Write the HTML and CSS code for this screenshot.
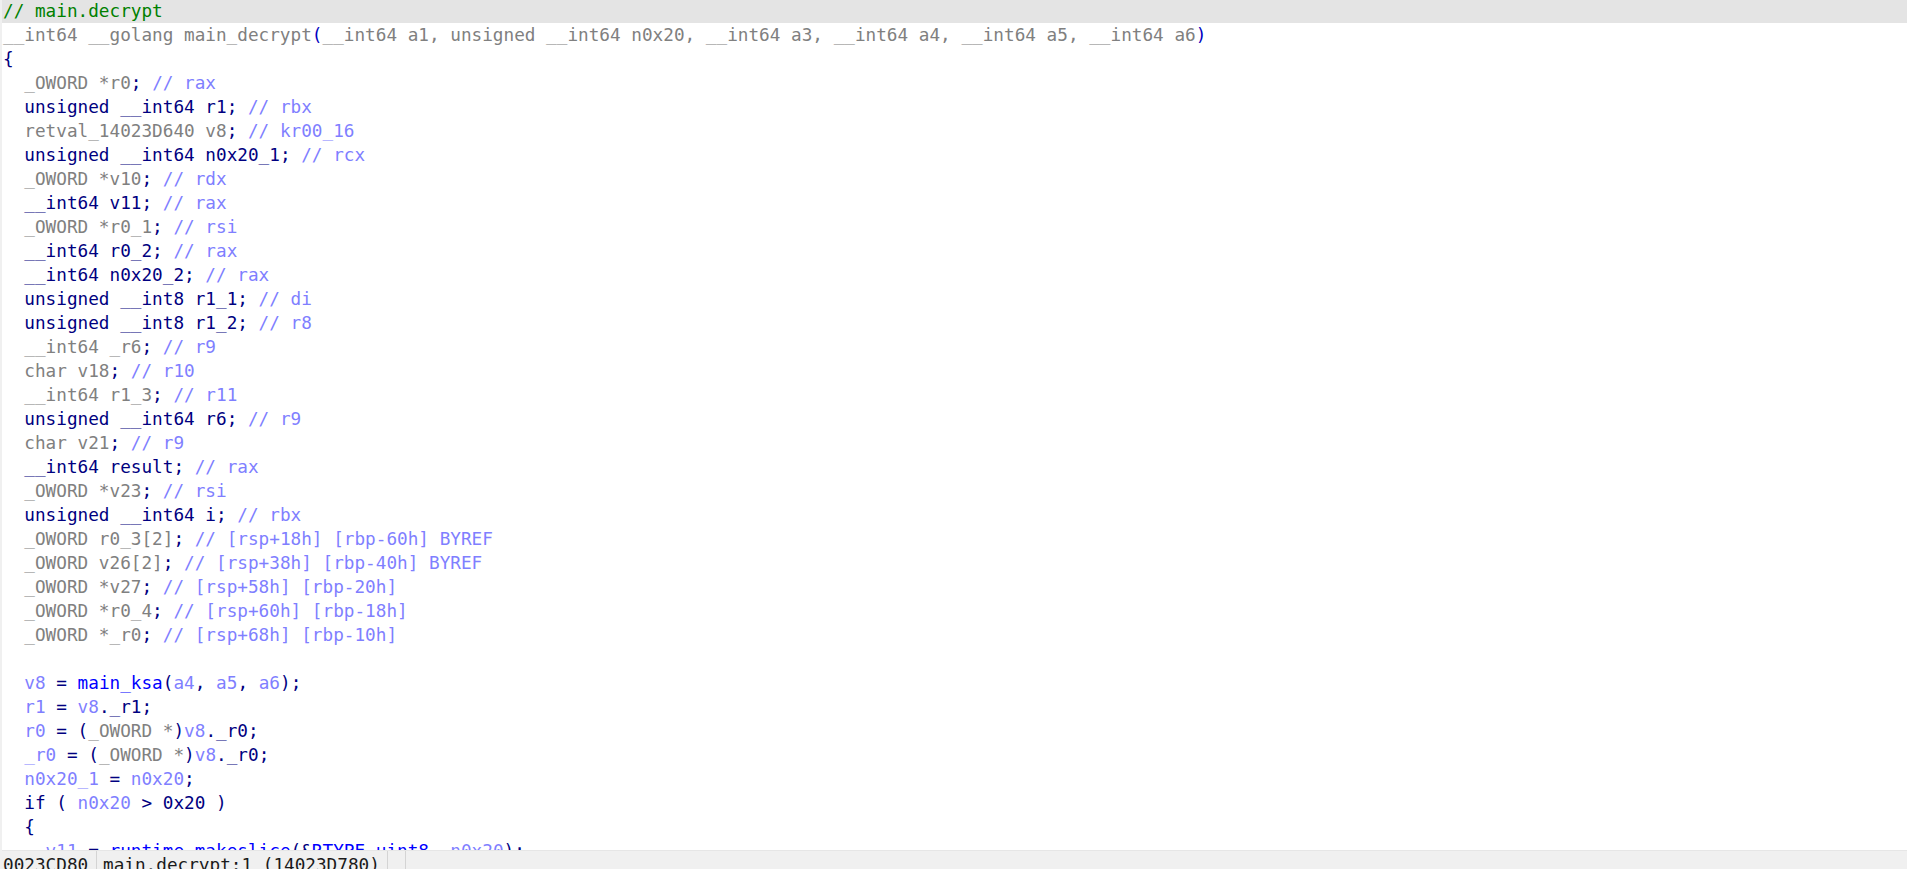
FILE: index.html
```html
<!DOCTYPE html>
<html lang="en">
<head>
  <meta charset="UTF-8">
  <title>Pseudocode-A</title>
  <link rel="stylesheet" href="styles.css">
</head>
<body>
  <div class="view">
    <!-- pseudocode listing -->
    <pre class="code"><div class="ln cur"><span class="cm">// main.decrypt</span></div><div class="ln"><span class="gr">__int64 __golang main_decrypt</span><span class="br">(</span><span class="gr">__int64 a1, unsigned __int64 n0x20, __int64 a3, __int64 a4, __int64 a5, __int64 a6</span><span class="br">)</span></div><div class="ln"><span class="kw">{</span></div><div class="ln">  <span class="gr">_OWORD *r0</span><span class="kw">;</span> <span class="rc">// rax</span></div><div class="ln">  <span class="kw">unsigned __int64 r1;</span> <span class="rc">// rbx</span></div><div class="ln">  <span class="gr">retval_14023D640 v8</span><span class="kw">;</span> <span class="rc">// kr00_16</span></div><div class="ln">  <span class="kw">unsigned __int64 n0x20_1;</span> <span class="rc">// rcx</span></div><div class="ln">  <span class="gr">_OWORD *v10</span><span class="kw">;</span> <span class="rc">// rdx</span></div><div class="ln">  <span class="kw">__int64 v11;</span> <span class="rc">// rax</span></div><div class="ln">  <span class="gr">_OWORD *r0_1</span><span class="kw">;</span> <span class="rc">// rsi</span></div><div class="ln">  <span class="kw">__int64 r0_2;</span> <span class="rc">// rax</span></div><div class="ln">  <span class="kw">__int64 n0x20_2;</span> <span class="rc">// rax</span></div><div class="ln">  <span class="kw">unsigned __int8 r1_1;</span> <span class="rc">// di</span></div><div class="ln">  <span class="kw">unsigned __int8 r1_2;</span> <span class="rc">// r8</span></div><div class="ln">  <span class="gr">__int64 _r6</span><span class="kw">;</span> <span class="rc">// r9</span></div><div class="ln">  <span class="gr">char v18</span><span class="kw">;</span> <span class="rc">// r10</span></div><div class="ln">  <span class="gr">__int64 r1_3</span><span class="kw">;</span> <span class="rc">// r11</span></div><div class="ln">  <span class="kw">unsigned __int64 r6;</span> <span class="rc">// r9</span></div><div class="ln">  <span class="gr">char v21</span><span class="kw">;</span> <span class="rc">// r9</span></div><div class="ln">  <span class="kw">__int64 result;</span> <span class="rc">// rax</span></div><div class="ln">  <span class="gr">_OWORD *v23</span><span class="kw">;</span> <span class="rc">// rsi</span></div><div class="ln">  <span class="kw">unsigned __int64 i;</span> <span class="rc">// rbx</span></div><div class="ln">  <span class="gr">_OWORD r0_3[2]</span><span class="kw">;</span> <span class="rc">// [rsp+18h] [rbp-60h] BYREF</span></div><div class="ln">  <span class="gr">_OWORD v26[2]</span><span class="kw">;</span> <span class="rc">// [rsp+38h] [rbp-40h] BYREF</span></div><div class="ln">  <span class="gr">_OWORD *v27</span><span class="kw">;</span> <span class="rc">// [rsp+58h] [rbp-20h]</span></div><div class="ln">  <span class="gr">_OWORD *r0_4</span><span class="kw">;</span> <span class="rc">// [rsp+60h] [rbp-18h]</span></div><div class="ln">  <span class="gr">_OWORD *_r0</span><span class="kw">;</span> <span class="rc">// [rsp+68h] [rbp-10h]</span></div><div class="ln"> </div><div class="ln">  <span class="va">v8</span><span class="kw"> = </span><span class="fn">main_ksa</span><span class="kw">(</span><span class="va">a4</span><span class="kw">, </span><span class="va">a5</span><span class="kw">, </span><span class="va">a6</span><span class="kw">);</span></div><div class="ln">  <span class="va">r1</span><span class="kw"> = </span><span class="va">v8</span><span class="kw">._r1;</span></div><div class="ln">  <span class="va">r0</span><span class="kw"> = (</span><span class="gr">_OWORD *</span><span class="kw">)</span><span class="va">v8</span><span class="kw">._r0;</span></div><div class="ln">  <span class="va">_r0</span><span class="kw"> = (</span><span class="gr">_OWORD *</span><span class="kw">)</span><span class="va">v8</span><span class="kw">._r0;</span></div><div class="ln">  <span class="va">n0x20_1</span><span class="kw"> = </span><span class="va">n0x20</span><span class="kw">;</span></div><div class="ln">  <span class="kw">if ( </span><span class="va">n0x20</span><span class="kw"> &gt; 0x20 )</span></div><div class="ln">  <span class="kw">{</span></div><div class="ln">    <span class="va">v11</span><span class="kw"> = </span><span class="fn">runtime_makeslice</span><span class="kw">(&amp;</span><span class="fn">RTYPE_uint8</span><span class="kw">, </span><span class="va">n0x20</span><span class="kw">);</span></div></pre>

    <!-- status bar -->
    <div class="status">
      <span class="cell addr">0023CD80</span>
      <span class="cell loc">main.decrypt:1 (14023D780)</span>
      <span class="cell gap"></span>
    </div>
  </div>
</body>
</html>
```

FILE: styles.css
```css
:root {
  --code-font: 'DejaVu Sans Mono', 'Liberation Mono', monospace;
  --gray: #808080;
  --navy: #000080;
  --var: #7f7fff;
  --fn: #0000ff;
  --green: #008000;
}

* {
  box-sizing: border-box;
  margin: 0;
  padding: 0;
}

html, body {
  height: 100%;
  overflow: hidden;
  background: #ffffff;
}

.view {
  display: flex;
  flex-direction: column;
  height: 100vh;
  border-left: 2px solid #f0f0f0;
}

.code {
  flex: 0 0 851px;
  overflow: hidden;
  margin-top: -1px;
  font-family: var(--code-font);
  font-size: 17.7px;
  line-height: 24px;
  color: var(--navy);
}

.ln {
  height: 24px;
  padding-left: 1px;
  white-space: pre;
}

.ln.cur {
  background: #e4e4e4;
}

.cm { color: var(--green); }
.gr { color: var(--gray); }
.kw { color: var(--navy); }
.br { color: #0000c0; }
.va { color: var(--var); }
.rc { color: var(--var); }
.fn { color: var(--fn); }

.status {
  display: flex;
  height: 26px;
  background: #f0f0f0;
  border-top: 1px solid #e6e6e6;
  font-family: var(--code-font);
  font-size: 17.7px;
  line-height: 24px;
  color: #1a1a1a;
}

.cell {
  border-right: 1px solid #d4d4d4;
  padding: 2px 4px 0 1px;
  white-space: pre;
}

.cell.addr {
  width: 95px;
}

.cell.loc {
  width: 291px;
  padding-left: 6px;
}

.cell.gap {
  width: 18px;
}
```
